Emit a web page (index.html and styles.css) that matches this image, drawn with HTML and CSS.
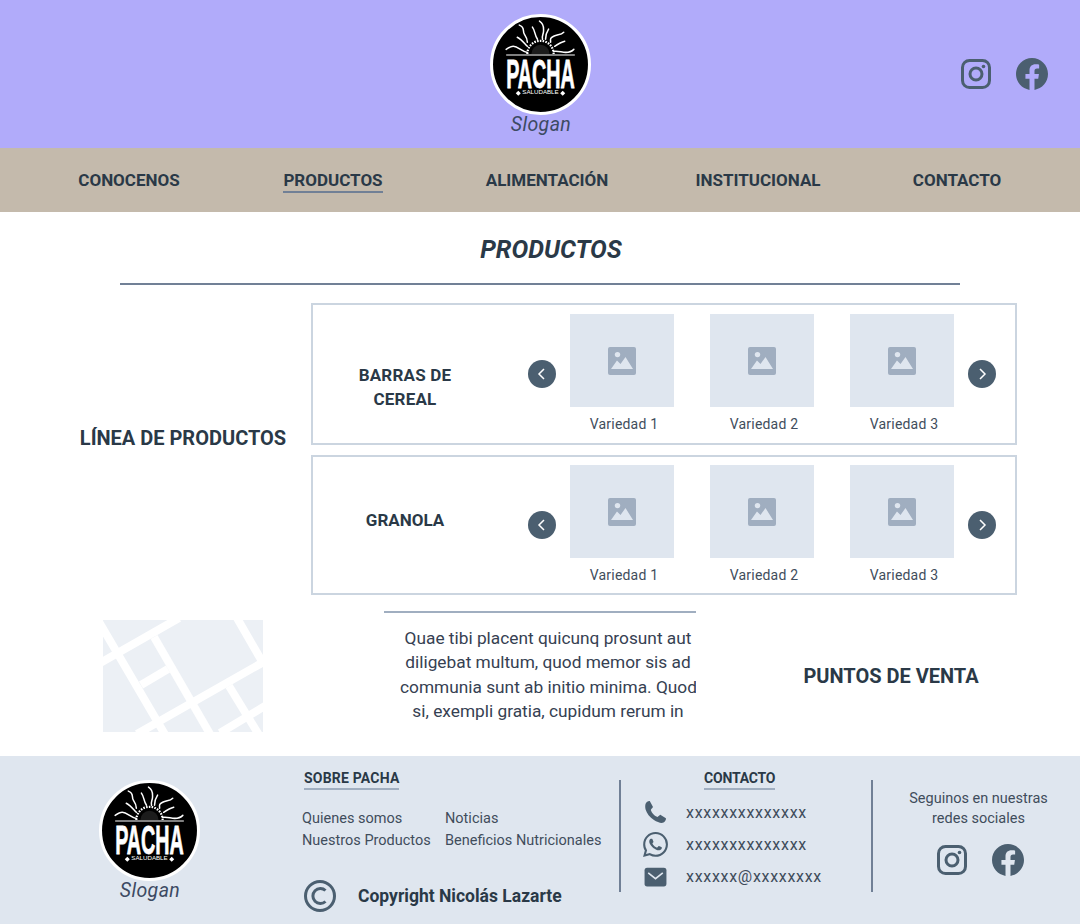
FILE: index.html
```html
<!DOCTYPE html>
<html lang="en">
<head>
    <meta charset="UTF-8">
    <meta name="viewport" content="width=device-width, initial-scale=1.0">
    <title>Pacha Saludable</title>
    <link rel="stylesheet" href="styles.css">
</head>
<body>
    <!-- shared icons -->
    <svg class="sprite" xmlns="http://www.w3.org/2000/svg">
        <symbol id="logo" viewBox="0 0 100 100">
            <circle cx="50" cy="50" r="48.500" fill="#000" stroke="#fff" stroke-width="3"/>
            <path d="M37 39.500a13 13 0 0 1 26 0" fill="none" stroke="#fff" stroke-width="2.200" stroke-dasharray="1.600 1.200"/>
            <path d="M41 39.500a9 9 0 0 1 18 0z" fill="#1c1c1c"/>
            <g fill="none" stroke="#fff" stroke-width="1.500" stroke-linecap="round">
                <path d="M29 11c6 2 3 6 5 9s3 5 3 8"/>
                <path d="M42 13c3 4 2 8 5 12"/>
                <path d="M49 7c5 3 4 7 4 10s-2 5-1 8"/>
                <path d="M58 15c-2 3-3 6-3 10"/>
                <path d="M73 18c-3 3-6 2-10 4s-3 3-3 6"/>
                <path d="M27 23c4 2 7 6 10 9"/>
                <path d="M74 27c-4 1-7 3-10 5"/>
                <path d="M16 35c3-2 5-3 7-3 5 0 8 5 14 6"/>
                <path d="M83 35c-2 2-5 3-8 3-4 0-8-2-12-1"/>
            </g>
            <path d="M16 40.500h68" stroke="#fff" stroke-width="1"/>
            <text class="logo-name" x="50" y="73" textLength="68" lengthAdjust="spacingAndGlyphs">PACHA</text>
            <text class="logo-sub" x="50" y="79.500" textLength="36" lengthAdjust="spacingAndGlyphs">SALUDABLE</text>
            <path d="M28 76l2.500 2.500-2.500 2.500-2.500-2.500zM72 76l2.500 2.500-2.500 2.500-2.500-2.500z" fill="#fff"/>
        </symbol>
        <symbol id="instagram" viewBox="0 0 30 30">
            <rect x="1.500" y="1.500" width="27" height="27" rx="7" fill="none" stroke="currentColor" stroke-width="3"/>
            <circle cx="15" cy="15" r="6" fill="none" stroke="currentColor" stroke-width="3"/>
            <circle cx="22.500" cy="7.500" r="1.800" fill="currentColor"/>
        </symbol>
        <symbol id="facebook" viewBox="0 0 24 24">
            <path fill="currentColor" d="M24 12.073c0-6.627-5.373-12-12-12s-12 5.373-12 12c0 5.990 4.388 10.954 10.125 11.854v-8.385H7.078v-3.470h3.047V9.430c0-3.007 1.792-4.669 4.533-4.669 1.312 0 2.686.235 2.686.235v2.953H15.830c-1.491 0-1.956.925-1.956 1.874v2.250h3.328l-.532 3.470h-2.796v8.385C19.612 23.027 24 18.062 24 12.073z"/>
        </symbol>
        <symbol id="picture" viewBox="0 0 28 28">
            <rect width="28" height="28" rx="2" fill="#a0aec0"/>
            <circle cx="9.500" cy="7.600" r="2.700" fill="#dfe6ef"/>
            <path d="M3 22l6-8.500 3.500 3.500 5-7 7.500 12z" fill="#dfe6ef"/>
        </symbol>
        <symbol id="prev" viewBox="0 0 28 28">
            <circle cx="14" cy="14" r="14" fill="#4b5f70"/>
            <path d="M16 9l-5 5 5 5" fill="none" stroke="#fff" stroke-width="1.500"/>
        </symbol>
        <symbol id="next" viewBox="0 0 28 28">
            <circle cx="14" cy="14" r="14" fill="#4b5f70"/>
            <path d="M12 9l5 5-5 5" fill="none" stroke="#fff" stroke-width="1.500"/>
        </symbol>
    </svg>

    <header class="top">
        <div class="brand">
            <svg class="brand-logo"><use href="#logo"/></svg>
            <span class="slogan">Slogan</span>
        </div>
        <div class="social top-social">
            <svg class="ig"><use href="#instagram"/></svg>
            <svg class="fb"><use href="#facebook"/></svg>
        </div>
    </header>

    <nav class="nav">
        <a href="#">CONOCENOS</a>
        <a href="#" class="active">PRODUCTOS</a>
        <a href="#">ALIMENTACIÓN</a>
        <a href="#">INSTITUCIONAL</a>
        <a href="#">CONTACTO</a>
    </nav>

    <main>
        <h1 class="page-title">PRODUCTOS</h1>

        <section class="lines">
            <h2 class="lines-title">LÍNEA DE PRODUCTOS</h2>
            <div class="line-list">
                <article class="line line-tall">
                    <h3 class="line-name">BARRAS DE<br>CEREAL</h3>
                    <svg class="arrow"><use href="#prev"/></svg>
                    <div class="tiles">
                        <figure class="tile"><div class="thumb"><svg><use href="#picture"/></svg></div><figcaption>Variedad 1</figcaption></figure>
                        <figure class="tile"><div class="thumb"><svg><use href="#picture"/></svg></div><figcaption>Variedad 2</figcaption></figure>
                        <figure class="tile"><div class="thumb"><svg><use href="#picture"/></svg></div><figcaption>Variedad 3</figcaption></figure>
                    </div>
                    <svg class="arrow"><use href="#next"/></svg>
                </article>
                <article class="line">
                    <h3 class="line-name">GRANOLA</h3>
                    <svg class="arrow"><use href="#prev"/></svg>
                    <div class="tiles">
                        <figure class="tile"><div class="thumb"><svg><use href="#picture"/></svg></div><figcaption>Variedad 1</figcaption></figure>
                        <figure class="tile"><div class="thumb"><svg><use href="#picture"/></svg></div><figcaption>Variedad 2</figcaption></figure>
                        <figure class="tile"><div class="thumb"><svg><use href="#picture"/></svg></div><figcaption>Variedad 3</figcaption></figure>
                    </div>
                    <svg class="arrow"><use href="#next"/></svg>
                </article>
            </div>
        </section>

        <section class="sales">
            <svg class="map" viewBox="0 0 160 112">
                <rect width="160" height="112" fill="#ecf0f5"/>
                <g fill="none" stroke="#fff" stroke-width="8">
                    <path d="M-5 0L64 118"/>
                    <path d="M-3 43L76 -2"/>
                    <path d="M51 17L107 114"/>
                    <path d="M38 65L65 49"/>
                    <path d="M34 114L164 40"/>
                    <path d="M134 -2L160 43"/>
                    <path d="M126 66L156 115"/>
                    <path d="M117 113L162 86"/>
                </g>
            </svg>
            <div class="about">
                <p>Quae tibi placent quicunq prosunt aut<br>diligebat multum, quod memor sis ad<br>communia sunt ab initio minima. Quod<br>si, exempli gratia, cupidum rerum in</p>
            </div>
            <h2 class="sales-title">PUNTOS DE VENTA</h2>
        </section>
    </main>

    <footer class="footer">
        <div class="brand foot-brand">
            <svg class="brand-logo"><use href="#logo"/></svg>
            <span class="slogan">Slogan</span>
        </div>

        <div class="foot-about">
            <h4 class="foot-heading">SOBRE PACHA</h4>
            <ul class="foot-links">
                <li>Quienes somos</li>
                <li>Noticias</li>
                <li>Nuestros Productos</li>
                <li>Beneficios Nutricionales</li>
            </ul>
            <div class="copyright">
                <svg class="copy-icon" viewBox="0 0 32 32">
                    <circle cx="16" cy="16" r="14.500" fill="none" stroke="#4b5f70" stroke-width="3"/>
                    <path d="M21.500 10.500a7.500 7.500 0 1 0 0 11" fill="none" stroke="#4b5f70" stroke-width="3"/>
                </svg>
                <span>Copyright Nicolás Lazarte</span>
            </div>
        </div>

        <div class="foot-contact">
            <h4 class="foot-heading">CONTACTO</h4>
            <div class="contact-row">
                <svg class="contact-icon" viewBox="0 0 24 24">
                    <path fill="#4b5f70" d="M2.500 3.500C3 2 5.500.5 6.500 1l3 5.500c.2.800-1.600 2.100-2 3 .8 2.800 3.700 5.800 6.500 6.800 1-.5 2.200-2.300 3-2l5 3.200c.4 1-.8 3.500-2.300 4.200-2.200 1-5.700-.2-9.200-2.400C6.500 16.500 3.500 12.500 2.500 9c-.5-2-.5-4 0-5.500z"/>
                </svg>
                <span>xxxxxxxxxxxxxx</span>
            </div>
            <div class="contact-row">
                <svg class="contact-icon" viewBox="0 0 24 24">
                    <path fill="#4b5f70" d="M17.472 14.382c-.297-.149-1.758-.867-2.030-.967-.273-.099-.471-.148-.670.150-.197.297-.767.966-.940 1.164-.173.199-.347.223-.644.075-.297-.150-1.255-.463-2.390-1.475-.883-.788-1.480-1.761-1.653-2.059-.173-.297-.018-.458.130-.606.134-.133.298-.347.446-.520.149-.174.198-.298.298-.497.099-.198.050-.371-.025-.520-.075-.149-.669-1.612-.916-2.207-.242-.579-.487-.500-.669-.510-.173-.008-.371-.010-.570-.010-.198 0-.520.074-.792.372-.272.297-1.040 1.016-1.040 2.479 0 1.462 1.065 2.875 1.213 3.074.149.198 2.096 3.200 5.077 4.487.709.306 1.262.489 1.694.625.712.227 1.360.195 1.871.118.571-.085 1.758-.719 2.006-1.413.248-.694.248-1.289.173-1.413-.074-.124-.272-.198-.570-.347m-5.421 7.403h-.004a9.870 9.870 0 01-5.031-1.378l-.361-.214-3.741.982.998-3.648-.235-.374a9.860 9.860 0 01-1.510-5.260c.001-5.450 4.436-9.884 9.888-9.884 2.640 0 5.122 1.030 6.988 2.898a9.825 9.825 0 012.893 6.994c-.003 5.450-4.437 9.884-9.885 9.884m8.413-18.297A11.815 11.815 0 0012.050 0C5.495 0 .160 5.335.157 11.892c0 2.096.547 4.142 1.588 5.945L.057 24l6.305-1.654a11.882 11.882 0 005.683 1.448h.005c6.554 0 11.890-5.335 11.893-11.893a11.821 11.821 0 00-3.480-8.413z"/>
                </svg>
                <span>xxxxxxxxxxxxxx</span>
            </div>
            <div class="contact-row">
                <svg class="contact-icon" viewBox="0 0 24 24">
                    <rect x="1.500" y="3.500" width="21" height="18" rx="2.500" fill="#4b5f70"/>
                    <path d="M5 8.500l7 5.500 7-5.500" fill="none" stroke="#dfe6ef" stroke-width="1.600"/>
                </svg>
                <span>xxxxxx@xxxxxxxx</span>
            </div>
        </div>

        <div class="foot-social">
            <p>Seguinos en nuestras<br>redes sociales</p>
            <div class="social">
                <svg class="ig"><use href="#instagram"/></svg>
                <svg class="fb"><use href="#facebook"/></svg>
            </div>
        </div>
    </footer>
</body>
</html>
```

FILE: styles.css
```css
* {
    box-sizing: border-box;
}

body {
    margin: 0;
    background-color: #fff;
    color: #2a3947;
    font-family: Roboto, "Liberation Sans", sans-serif;
}

h1, h2, h3, h4, p, ul, figure {
    margin: 0;
    padding: 0;
}

.sprite {
    display: none;
}

.logo-name {
    fill: #fff;
    stroke: #fff;
    stroke-width: 0.8px;
    font-family: "Liberation Sans", sans-serif;
    font-size: 41px;
    font-weight: 700;
    text-anchor: middle;
}

.logo-sub {
    fill: #fff;
    font-family: "Liberation Sans", sans-serif;
    font-size: 5px;
    text-anchor: middle;
}

/* header */
.top {
    display: grid;
    grid-template-columns: 1fr auto 1fr;
    align-items: center;
    height: 148px;
    background-color: #b1abfa;
}

.brand {
    display: flex;
    flex-direction: column;
    align-items: center;
    grid-column: 2;
}

.brand-logo {
    width: 101px;
    height: 101px;
}

.slogan {
    margin-left: 2px;
    font-size: 19.500px;
    line-height: 20px;
    font-style: italic;
    color: #3c4a63;
    letter-spacing: 0.4px;
}

.social {
    display: flex;
    align-items: center;
    gap: 25px;
    color: #4b5f70;
}

.top-social {
    justify-content: flex-end;
    padding-right: 32px;
}

.ig {
    width: 30px;
    height: 30px;
}

.fb {
    width: 32px;
    height: 32px;
}

/* menu */
.nav {
    display: grid;
    grid-template-columns: 204px 204px 224px 198px 200px;
    justify-items: center;
    align-items: center;
    height: 64px;
    padding: 2px 0 0 27px;
    background-color: #c4baac;
}

.nav a {
    color: #2a3947;
    font-size: 17px;
    font-weight: 700;
    text-decoration: none;
    white-space: nowrap;
    padding-bottom: 1px;
    border-bottom: 2px solid transparent;
}

.nav a.active {
    border-bottom-color: #718096;
}

/* products */
.page-title {
    width: 840px;
    height: 73px;
    margin: 0 auto 18px;
    padding: 22px 0 0 22px;
    border-bottom: 2px solid #718096;
    text-align: center;
    font-size: 25px;
    line-height: 32px;
    font-style: italic;
    font-weight: 700;
}

.lines {
    display: grid;
    grid-template-columns: 311px 706px;
    align-items: center;
}

.lines-title {
    padding: 0 0 22px 55px;
    text-align: center;
    font-size: 20px;
    font-weight: 700;
    white-space: nowrap;
}

.line-list {
    display: flex;
    flex-direction: column;
    gap: 10px;
}

.line {
    display: flex;
    align-items: center;
    height: 140px;
    padding-right: 19px;
    border: 2px solid #cbd5e0;
}

.line-tall {
    height: 142px;
}

.line-name {
    width: 184px;
    margin-right: 31px;
    padding-bottom: 10px;
    text-align: center;
    font-size: 17px;
    line-height: 24px;
    font-weight: 700;
}

.line-tall .line-name {
    padding: 26px 0 0;
    letter-spacing: 0.2px;
}

.arrow {
    flex: none;
    width: 28px;
    height: 28px;
}

.tiles {
    display: flex;
    gap: 36px;
    margin: 0 14px;
}

.tile {
    width: 104px;
    text-align: center;
}

.thumb {
    display: flex;
    align-items: center;
    justify-content: center;
    height: 93px;
    background-color: #dfe6ef;
}

.thumb svg {
    width: 28px;
    height: 28px;
}

.tile figcaption {
    padding: 8px 0 0 4px;
    font-size: 14px;
    line-height: 19px;
    color: #3f4d5c;
    letter-spacing: 0.2px;
    white-space: nowrap;
}

/* points of sale */
.sales {
    display: flex;
    height: 161px;
    padding-top: 16px;
}

.map {
    flex: none;
    width: 160px;
    height: 112px;
    margin: 9px 0 0 103px;
}

.about {
    flex: none;
    width: 312px;
    height: 110px;
    margin-left: 121px;
    border-top: 2px solid #a0aec0;
    padding: 13px 0 0 16px;
    overflow: hidden;
}

.about p {
    text-align: center;
    font-size: 17.300px;
    line-height: 24.300px;
    color: #364152;
    white-space: nowrap;
}

.sales-title {
    flex: 1;
    padding: 53px 10px 0 16px;
    text-align: center;
    font-size: 20px;
    font-weight: 700;
    white-space: nowrap;
}

/* footer */
.footer {
    display: flex;
    height: 168px;
    padding-top: 24px;
    background-color: #dfe6ef;
}

.foot-brand {
    width: 302px;
    padding-right: 4px;
}

.foot-about {
    width: 317px;
    margin-top: -12px;
}

.foot-heading {
    display: inline-block;
    font-size: 14px;
    line-height: 17px;
    font-weight: 700;
    border-bottom: 2px solid #a0aec0;
    padding-bottom: 1px;
    letter-spacing: 0.2px;
}

.foot-about .foot-heading {
    margin-left: 2px;
}

.foot-links {
    display: grid;
    grid-template-columns: 143px auto;
    justify-content: start;
    margin-top: 18px;
    list-style-type: none;
    font-size: 14.500px;
    line-height: 22px;
    color: #3f4d5c;
    white-space: nowrap;
}

.copyright {
    display: flex;
    align-items: center;
    gap: 22px;
    margin: 28px 0 0 2px;
    font-size: 17.500px;
    font-weight: 700;
    color: #2a3947;
}

.copy-icon {
    width: 32px;
    height: 32px;
}

.foot-contact {
    width: 254px;
    height: 112px;
    padding-left: 22px;
    border-left: 2px solid #718096;
    border-right: 2px solid #718096;
    font-size: 16px;
    color: #3f4d5c;
}

.foot-contact .foot-heading {
    display: block;
    width: 71px;
    margin: -10px 0 6px 61px;
    white-space: nowrap;
    letter-spacing: -0.2px;
    color: #2a3947;
}

.contact-row {
    display: flex;
    align-items: center;
    gap: 18px;
    height: 32px;
    letter-spacing: 0.7px;
}

.contact-icon {
    width: 25px;
    height: 25px;
}

.foot-social {
    display: flex;
    flex: 1;
    flex-direction: column;
    align-items: center;
    padding: 9px 0 0 4px;
    font-size: 14.500px;
    line-height: 20px;
    color: #3f4d5c;
    text-align: center;
}

.foot-social .social {
    margin: 15px 0 0 4px;
}
```
